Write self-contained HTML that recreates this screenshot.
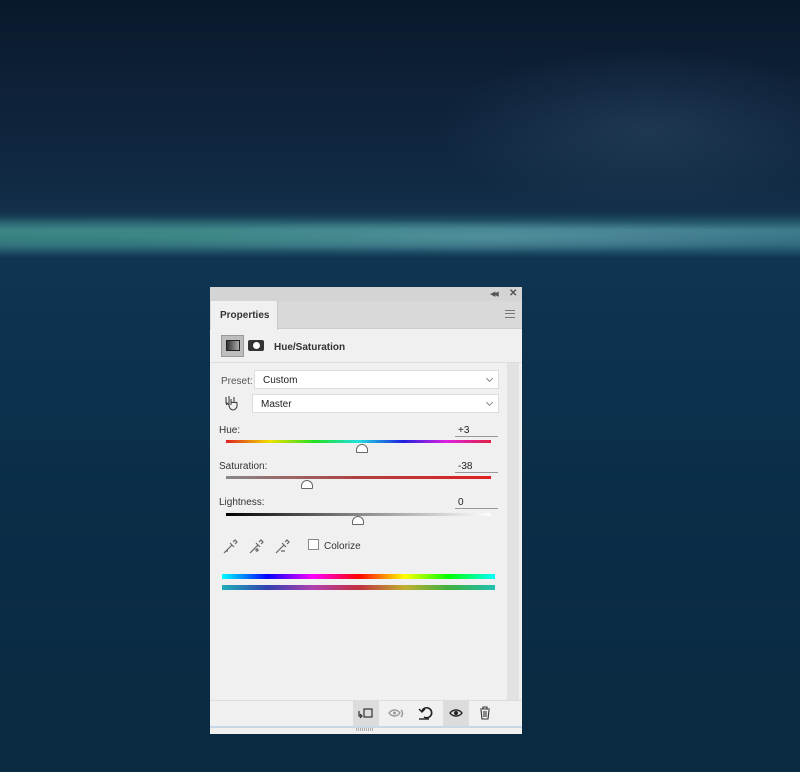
<!DOCTYPE html>
<html><head><style>
*{margin:0;padding:0;box-sizing:border-box}
body{width:800px;height:772px;overflow:hidden;position:relative;font-family:"Liberation Sans",sans-serif;
background:linear-gradient(180deg,#0a182c 0px,#0e2239 100px,#112a43 180px,#12304a 212px,#1f4d62 220px,#3c7a8a 230px,#2f6a7c 245px,#0f3552 258px,#0d3350 300px,#0b2d47 500px,#0a2a40 772px);}
.abs{position:absolute}
.p{left:210px;top:287px;width:312px;height:447px;background:#f0f0f0;font-size:10px;color:#222}
.t{font-size:10px;color:#333}
.dd{position:absolute;height:19px;background:#fff;border:1px solid #dcdcdc;font-size:10px;padding:4px 8px;color:#222}
.dd:after{content:"";position:absolute;right:6px;top:5px;width:4px;height:4px;border-right:1px solid #888;border-bottom:1px solid #888;transform:rotate(45deg)}
.ul{position:absolute;border-bottom:1px solid #999;width:43px;height:14px;font-size:10px;padding-left:3px;padding-top:2px}
.th{position:absolute;width:12px;height:9px;border:1px solid #666;border-radius:6px 6px 1px 1px;background:#fff}
</style></head><body>
<div class="abs" style="left:0;top:216px;width:800px;height:42px;background:radial-gradient(ellipse at 15% 45%,rgba(60,150,130,.55),transparent 55%),radial-gradient(ellipse at 60% 50%,rgba(140,190,210,.35),transparent 55%)"></div>
<div class="abs" style="left:420px;top:40px;width:380px;height:180px;background:radial-gradient(ellipse at 60% 50%,rgba(60,90,120,.35),transparent 65%)"></div>
<div class="abs p">
 <div class="abs" style="left:0;top:0;width:312px;height:14px;background:#d4d4d4"></div>
 <div class="abs" style="left:280px;top:3px;font-size:7px;color:#555;letter-spacing:-2px">◀◀</div>
 <div class="abs" style="left:299px;top:1px;font-size:10px;color:#555;font-weight:bold">✕</div>
 <div class="abs" style="left:0;top:14px;width:312px;height:28px;background:#d9d9d9;border-bottom:1px solid #ccc"></div>
 <div class="abs" style="left:1px;top:14px;width:67px;height:29px;background:#f0f0f0;border-right:1px solid #c8c8c8"></div>
 <div class="abs" style="left:10px;top:23px;font-size:10px;font-weight:bold;color:#333">Properties</div>
 <div class="abs" style="left:295px;top:23px;width:10px;height:8px;border-top:1px solid #777;border-bottom:1px solid #777"></div>
 <div class="abs" style="left:295px;top:26px;width:10px;height:1px;background:#777"></div>
 <div class="abs" style="left:11px;top:48px;width:23px;height:22px;background:#bdbdbd;border:1px solid #999"></div>
 <div class="abs" style="left:16px;top:53px;width:14px;height:11px;background:linear-gradient(90deg,#333,#aaa);border:1px solid #222"></div>
 <div class="abs" style="left:38px;top:53px;width:16px;height:11px;background:#333;border-radius:2px"></div>
 <div class="abs" style="left:43px;top:55px;width:7px;height:7px;background:#fff;border-radius:50%"></div>
 <div class="abs" style="left:64px;top:55px;font-size:10px;font-weight:bold;color:#333">Hue/Saturation</div>
 <div class="abs" style="left:0;top:75px;width:312px;height:1px;background:#ddd"></div>
 <div class="abs" style="left:297px;top:76px;width:12px;height:337px;background:#e2e2e2"></div>
 <div class="abs t" style="left:11px;top:89px;color:#555">Preset:</div>
 <div class="dd" style="left:44px;top:83px;width:245px">Custom</div>
 <svg class="abs" style="left:13px;top:107px" width="18" height="18" viewBox="0 0 18 18" fill="none" stroke="#333" stroke-width="1"><path d="M2 4h2M2 6h2M2 8h2M10 4h2M10 6h2M10 8h2"/><path d="M6 2v9M8 5v6M6 11c0 3 2 5 4 5s4-2 4-4v-3c0-1-2-1-2 0M12 9c0-1-2-1-2 0M10 9c0-1-2-1-2 0M6 11l-2-2c-1 0-1 1 0 2"/></svg>
 <div class="dd" style="left:42px;top:107px;width:247px">Master</div>
 <div class="abs t" style="left:9px;top:138px">Hue:</div>
 <div class="ul" style="left:245px;top:136px">+3</div>
 <div class="abs" style="left:16px;top:153px;width:265px;height:3px;background:linear-gradient(90deg,#e02020,#f0e000,#20e020,#20e0e0,#2020e0,#e020e0,#e02040)"></div>
 <div class="th" style="left:146px;top:157px"></div>
 <div class="abs t" style="left:9px;top:174px">Saturation:</div>
 <div class="ul" style="left:245px;top:172px">-38</div>
 <div class="abs" style="left:16px;top:189px;width:265px;height:3px;background:linear-gradient(90deg,#888,#b04040,#e02020)"></div>
 <div class="th" style="left:91px;top:193px"></div>
 <div class="abs t" style="left:9px;top:210px">Lightness:</div>
 <div class="ul" style="left:245px;top:208px">0</div>
 <div class="abs" style="left:16px;top:226px;width:265px;height:3px;background:linear-gradient(90deg,#000,#888 50%,#fff)"></div>
 <div class="th" style="left:142px;top:229px"></div>
 <svg class="abs" style="left:12px;top:250px" width="80" height="18" viewBox="0 0 80 18" fill="none" stroke="#666" stroke-width="1.2">
  <path d="M2 16l8-8M4 14l2 0M8 6l4 4M11 5l2-2 2 2-2 2"/>
  <path d="M28 16l8-8M34 6l4 4M37 5l2-2 2 2-2 2M33 13h4M35 11v4"/>
  <path d="M54 16l8-8M60 6l4 4M63 5l2-2 2 2-2 2M59 14h4"/>
 </svg>
 <div class="abs" style="left:98px;top:252px;width:11px;height:11px;border:1px solid #888;background:#fff"></div>
 <div class="abs t" style="left:114px;top:254px">Colorize</div>
 <div class="abs" style="left:12px;top:287px;width:273px;height:5px;background:linear-gradient(90deg,#00ffff,#0000ff,#ff00ff,#ff0000 50%,#ffff00 67%,#00ff00 83%,#00ffff)"></div>
 <div class="abs" style="left:12px;top:298px;width:273px;height:5px;background:linear-gradient(90deg,#20b0b8,#3040b0,#b040b0,#c03040 50%,#c0b030 67%,#40b040 83%,#20c0b0)"></div>
 <div class="abs" style="left:0;top:413px;width:312px;height:1px;background:#ddd"></div>
 <div class="abs" style="left:143px;top:414px;width:26px;height:25px;background:#dcdcdc"></div>
 <div class="abs" style="left:233px;top:414px;width:26px;height:25px;background:#dcdcdc"></div>
 <svg class="abs" style="left:143px;top:414px" width="150" height="25" viewBox="0 0 150 25" fill="none" stroke-width="1.4">
  <path d="M6 10v5h3M7 13l2 2-2 2" stroke="#333" stroke-width="1.2"/><rect x="11" y="8" width="8" height="8" stroke="#333" stroke-width="1.2"/>
  <path d="M36 12c3-4 8-4 11 0c-3 4-8 4-11 0z" stroke="#999"/><circle cx="41.5" cy="12" r="1.5" fill="#999" stroke="none"/><path d="M48 9c2 2 2 5 0 7" stroke="#999"/>
  <path d="M69 10a5 5 0 1 1 2 6" stroke="#222" stroke-width="1.6"/><path d="M66 8l3 3 3-3" stroke="#222" stroke-width="1.4"/><path d="M66 18h10" stroke="#222"/>
  <path d="M97 12c3-4 9-4 12 0c-3 4-9 4-12 0z" stroke="#222"/><circle cx="103" cy="12" r="2" fill="#222" stroke="none"/>
  <path d="M127 8h10M130 8V6h4v2M128 9l1 9h6l1-9M131 10v6M133 10v6" stroke="#333" stroke-width="1.1"/>
 </svg>
 <div class="abs" style="left:0;top:439px;width:312px;height:2px;background:#c8d8e8"></div>
 <div class="abs" style="left:146px;top:441px;width:18px;height:3px;background:repeating-linear-gradient(90deg,#aaa 0 1px,transparent 1px 2px)"></div>
</div>
</body></html>
